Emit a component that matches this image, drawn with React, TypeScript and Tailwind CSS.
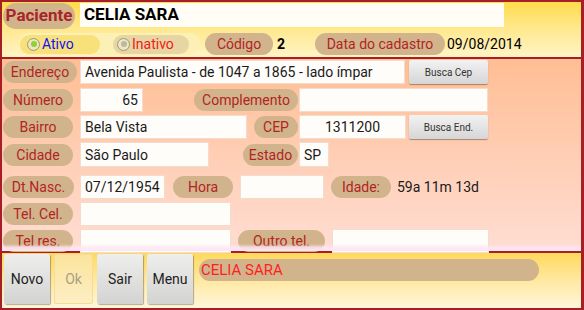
import React from "react";

const font = "font-['Roboto','Liberation_Sans',sans-serif]";

function Pill({ w, children, className = "" }: { w: string; children: React.ReactNode; className?: string }) {
  return (
    <div
      className={`${w} h-[22px] shrink-0 rounded-full bg-[#d2b48c] text-[#b22424] text-[14px] flex items-center justify-center leading-none ${className}`}
    >
      {children}
    </div>
  );
}

function Field({ w, children, className = "" }: { w: string; children?: React.ReactNode; className?: string }) {
  return (
    <div
      className={`${w} h-[24px] shrink-0 bg-[#fffdf9] border border-[#f3dccb] text-[14px] text-[#1a1a1a] flex items-center px-[4px] leading-none ${className}`}
    >
      {children}
    </div>
  );
}

function SmallButton({ children }: { children: React.ReactNode }) {
  return (
    <div className="w-[79px] h-[24px] shrink-0 rounded-[2px] bg-linear-to-b from-[#f2f2f2] to-[#d6d6d6] shadow-[0_1px_1px_rgba(0,0,0,0.35)] text-[10px] text-[#333] flex items-center justify-center">
      {children}
    </div>
  );
}

function LabelCell({ children, w = "w-[70px]" }: { children: React.ReactNode; w?: string }) {
  return (
    <div className="w-[78px] pl-[1px] shrink-0 flex items-center">
      <Pill w={w}>{children}</Pill>
    </div>
  );
}

function Radio({ on }: { on: boolean }) {
  return (
    <div className="w-[13px] h-[13px] rounded-full border border-[#9a9a7a] bg-[#eee6c0] flex items-center justify-center shrink-0">
      <div className={`w-[6px] h-[6px] rounded-full ${on ? "bg-[#8ed336]" : "bg-[#bdb8a6]"}`} />
    </div>
  );
}

function BarButton({ w, children, disabled = false }: { w: string; children: React.ReactNode; disabled?: boolean }) {
  return (
    <div
      className={`${w} h-[50px] shrink-0 rounded-[2px] flex items-center justify-center text-[14px] ${
        disabled
          ? "bg-linear-to-b from-[#fbe49c] to-[#fdeec4] text-[#a8a083] border border-[#f5dc90]"
          : "bg-linear-to-b from-[#eeeeec] to-[#d3d3d1] text-[#222] shadow-[1px_1px_1px_rgba(0,0,0,0.3)]"
      }`}
    >
      {children}
    </div>
  );
}

export default function App() {
  return (
    <div className={`w-[584px] h-[310px] overflow-hidden bg-[#a61e26] pt-[2px] pl-[2px] pr-[3px] pb-[2px] flex flex-col gap-[2px] ${font}`}>
      {/* header */}
      <div className="h-[55px] shrink-0 bg-linear-to-b from-[#ffdc48] to-[#fff4c4] flex flex-col">
        <div className="mt-[1px] flex items-center">
          <div className="ml-[1px] w-[72px] h-[26px] rounded-full bg-[#d2b48c] text-[#a8262a] text-[17px] font-bold flex items-center justify-center">
            Paciente
          </div>
          <div className="ml-[5px] w-[424px] h-[24px] bg-[#fffdf5] text-[17px] font-bold text-black flex items-center px-[4px] self-start">
            CELIA SARA
          </div>
        </div>
        <div className="mt-[4px] flex items-center h-[22px]">
          <div className="ml-[16px] w-[182px] h-[22px] rounded-full bg-[#fdf0b4] flex items-center">
            <div className="ml-[2px] w-[80px] h-[19px] rounded-full bg-[#f8e07a] flex items-center pl-[7px] gap-[2px]">
              <Radio on />
              <span className="text-[14px] text-[#1010f0] leading-none">Ativo</span>
            </div>
            <div className="ml-[13px] w-[76px] h-[19px] rounded-full bg-[#e8d5a4] flex items-center pl-[4px] gap-[2px]">
              <Radio on={false} />
              <span className="text-[14px] text-[#f01a1a] leading-none">Inativo</span>
            </div>
          </div>
          <Pill w="w-[68px]" className="ml-[5px]">Código</Pill>
          <div className="w-[42px] pl-[4px] text-[14px] font-bold text-black">2</div>
          <Pill w="w-[130px]">Data do cadastro</Pill>
          <div className="ml-[2px] text-[14px] text-black">09/08/2014</div>
        </div>
      </div>

      {/* form */}
      <div className="relative h-[192px] shrink-0 bg-linear-to-b from-[#ffbe94] to-[#ffddd3] flex flex-col">
        <div className="mt-[1px] flex items-center">
          <LabelCell w="w-[74px]">Endereço</LabelCell>
          <Field w="w-[325px]">Avenida Paulista - de 1047 a 1865 - lado ímpar</Field>
          <div className="ml-[4px]">
            <SmallButton>Busca Cep</SmallButton>
          </div>
        </div>
        <div className="mt-[4px] flex items-center">
          <LabelCell>Número</LabelCell>
          <Field w="w-[63px]" className="justify-end">65</Field>
          <Pill w="w-[104px]" className="ml-[51px]">Complemento</Pill>
          <Field w="w-[189px]" className="ml-[1px]" />
        </div>
        <div className="mt-[3px] flex items-center">
          <LabelCell>Bairro</LabelCell>
          <Field w="w-[167px]">Bela Vista</Field>
          <Pill w="w-[44px]" className="ml-[7px]">CEP</Pill>
          <Field w="w-[107px]" className="ml-[1px] justify-center">1311200</Field>
          <div className="ml-[3px]">
            <SmallButton>Busca End.</SmallButton>
          </div>
        </div>
        <div className="mt-[3px] flex items-center">
          <LabelCell>Cidade</LabelCell>
          <Field w="w-[129px]" className="h-[25px]">São Paulo</Field>
          <Pill w="w-[55px]" className="ml-[34px]">Estado</Pill>
          <Field w="w-[30px]" className="ml-[1px] h-[25px]">SP</Field>
        </div>
        <div className="mt-[8px] flex items-center">
          <LabelCell w="w-[71px]">Dt.Nasc.</LabelCell>
          <Field w="w-[85px]">07/12/1954</Field>
          <Pill w="w-[60px]" className="ml-[8px]">Hora</Pill>
          <Field w="w-[84px]" className="ml-[7px]" />
          <Pill w="w-[60px]" className="ml-[7px]">Idade:</Pill>
          <div className="ml-[6px] text-[14px] text-[#1a1a1a]">59a 11m 13d</div>
        </div>
        <div className="mt-[3px] flex items-center">
          <LabelCell>Tel. Cel.</LabelCell>
          <Field w="w-[151px]" />
        </div>
        <div className="mt-[3px] flex items-center">
          <LabelCell>Tel res.</LabelCell>
          <Field w="w-[151px]" />
          <Pill w="w-[87px]" className="ml-[7px]">Outro tel.</Pill>
          <Field w="w-[157px]" className="ml-[7px]" />
        </div>
        <div className="absolute left-0 right-0 bottom-0 h-[7px] bg-linear-to-b from-transparent via-[#ffe6f4]/80 to-[#fbe4fb]" />
      </div>

      {/* bottom bar */}
      <div className="h-[55px] shrink-0 bg-linear-to-b from-[#ffd95a] to-[#fff6da] flex items-start pt-[1px]">
        <div className="ml-[2px]">
          <BarButton w="w-[46px]">Novo</BarButton>
        </div>
        <div className="ml-[4px]">
          <BarButton w="w-[39px]" disabled>Ok</BarButton>
        </div>
        <div className="ml-[4px]">
          <BarButton w="w-[46px]">Sair</BarButton>
        </div>
        <div className="ml-[4px]">
          <BarButton w="w-[46px]">Menu</BarButton>
        </div>
        <div className="ml-[6px] mt-[5px] w-[340px] h-[22px] rounded-full bg-[#d2b48c] flex items-center pl-[2px] text-[15px] text-[#ff1e1e] leading-none">
          CELIA SARA
        </div>
      </div>
    </div>
  );
}
